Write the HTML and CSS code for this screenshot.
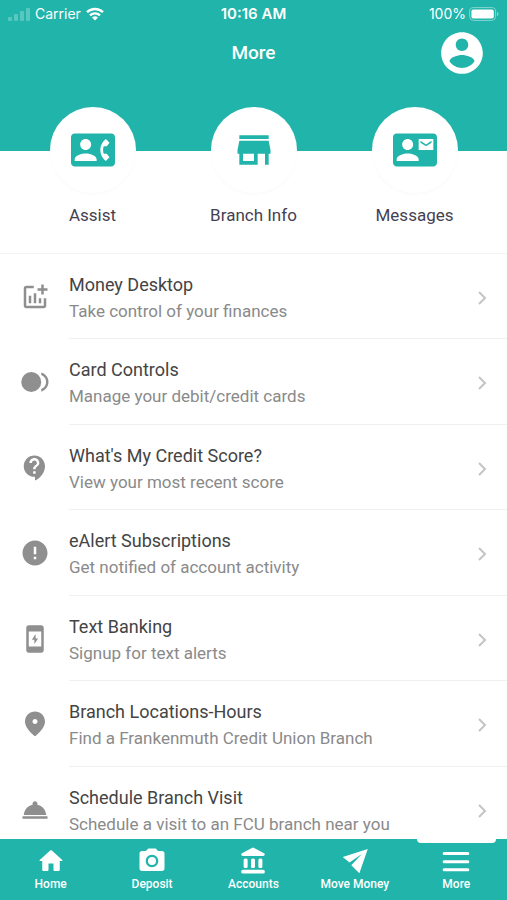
FILE: index.html
```html
<!DOCTYPE html>
<html lang="en">
<head>
<meta charset="utf-8">
<meta name="viewport" content="width=device-width, initial-scale=1">
<title>More</title>
<link rel="stylesheet" href="styles.css">
</head>
<body>
<header class="header">
  <div class="status">
    <div class="status-side">
      <svg class="signal" viewBox="0 0 22 13" aria-hidden="true"><rect x="0" y="9" width="4" height="4" rx="1"/><rect x="6" y="6" width="4" height="7" rx="1"/><rect x="12" y="3" width="4" height="10" rx="1"/><rect x="18" y="0" width="4" height="13" rx="1"/></svg>
      <span>Carrier</span>
      <svg class="wifi" viewBox="0 0 18 14" aria-hidden="true"><path d="M1 5.2a11.6 11.6 0 0 1 16 0M4 8.4a7.2 7.2 0 0 1 10 0" fill="none" stroke="#fff" stroke-width="2.4"/><path d="M9 13.6 6 10.6a4.3 4.3 0 0 1 6 0z" fill="#fff"/></svg>
    </div>
    <time class="clock">10:16 AM</time>
    <div class="status-side status-end">
      <span>100%</span>
      <svg class="battery" viewBox="0 0 30 14" aria-hidden="true"><rect x=".6" y=".6" width="26" height="12.8" rx="4" fill="none" stroke="#fff" stroke-opacity=".45"/><rect x="2.4" y="2.4" width="22.4" height="9.2" rx="2" fill="#fff"/><path d="M28 4.8c2 .8 2 3.6 0 4.4z" fill="#fff" fill-opacity=".45"/></svg>
    </div>
  </div>
  <div class="title-bar">
    <h1>More</h1>
    <button class="profile" type="button" aria-label="Profile">
      <svg viewBox="0 0 24 24"><path d="M12 2C6.48 2 2 6.48 2 12s4.48 10 10 10 10-4.48 10-10S17.52 2 12 2zm0 3c1.66 0 3 1.34 3 3s-1.34 3-3 3-3-1.34-3-3 1.34-3 3-3zm0 14.2c-2.5 0-4.71-1.28-6-3.22.03-1.99 4-3.08 6-3.08 1.99 0 5.97 1.09 6 3.08-1.29 1.94-3.5 3.22-6 3.22z"/></svg>
    </button>
  </div>
</header>
<section class="shortcuts">
  <a href="#assist"><span class="disc"><svg viewBox="0 0 24 24"><path d="M22 3H2C.9 3 0 3.9 0 5v14c0 1.1.9 2 2 2h20c1.1 0 1.99-.9 1.99-2L24 5c0-1.1-.9-2-2-2zM8 6c1.66 0 3 1.34 3 3s-1.34 3-3 3-3-1.34-3-3 1.34-3 3-3zm6 12H2v-1c0-2 4-3.1 6-3.1s6 1.1 6 3.1v1zm3.85-4h1.64L21 16l-1.99 1.99c-1.31-.98-2.28-2.38-2.73-3.99-.18-.64-.28-1.31-.28-2s.1-1.36.28-2c.45-1.62 1.42-3.01 2.73-3.99L21 8l-1.51 2h-1.64c-.22.63-.35 1.3-.35 2s.13 1.37.35 2z"/></svg></span>Assist</a>
  <a href="#branch"><span class="disc"><svg viewBox="0 0 24 24"><path d="M20 4H4v2h16V4zm1 10v-2l-1-5H4l-1 5v2h1v6h10v-6h4v6h2v-6h1zm-9 4H6v-4h6v4z"/></svg></span>Branch Info</a>
  <a href="#messages"><span class="disc"><svg viewBox="0 0 24 24"><path d="M22 3H2C.9 3 0 3.9 0 5v14c0 1.1.9 2 2 2h20c1.1 0 1.99-.9 1.99-2L24 5c0-1.1-.9-2-2-2zM8 6c1.66 0 3 1.34 3 3s-1.34 3-3 3-3-1.34-3-3 1.34-3 3-3zm6 12H2v-1c0-2 4-3.1 6-3.1s6 1.1 6 3.1v1zm8-6h-8V6h8v6zm-1-5l-3 2-3-2v1l3 2 3-2V7z"/></svg></span>Messages</a>
</section>
<main class="content">
  <ul class="list">
    <li><a href="#money-desktop"><svg class="icon" viewBox="0 0 24 24"><path d="M22 5v2h-3v3h-2V7h-3V5h3V2h2v3h3zm-3 14H5V5h6V3H5c-1.1 0-2 .9-2 2v14c0 1.1.9 2 2 2h14c1.1 0 2-.9 2-2v-6h-2v6zm-4-6v4h2v-4h-2zm-4 4h2V9h-2v8zm-2 0v-6H7v6h2z"/></svg><span class="text"><b>Money Desktop</b><small>Take control of your finances</small><svg class="chevron" viewBox="0 0 10 16"><path d="m2 2 6 6-6 6"/></svg></span></a></li>
    <li><a href="#card-controls"><svg class="icon" viewBox="0 0 24 24"><circle cx="9" cy="12" r="8"/><path d="M17 4.3v2.1a6 6 0 0 1 0 11.2v2.1a8 8 0 0 0 0-15.4z"/></svg><span class="text"><b>Card Controls</b><small>Manage your debit/credit cards</small><svg class="chevron" viewBox="0 0 10 16"><path d="m2 2 6 6-6 6"/></svg></span></a></li>
    <li><a href="#credit-score"><svg class="icon" viewBox="0 0 24 24"><path d="M11.500 2C6.810 2 3 5.810 3 10.500S6.810 19 11.500 19h.5v3c4.860-2.340 8-7 8-11.500C20 5.810 16.190 2 11.500 2zm1 14.500h-2v-2h2v2zm0-3.500h-2c0-3.250 3-3 3-5 0-1.100-.9-2-2-2s-2 .9-2 2h-2c0-2.210 1.790-4 4-4s4 1.790 4 4c0 2.500-3 2.750-3 5z"/></svg><span class="text"><b>What's My Credit Score?</b><small>View your most recent score</small><svg class="chevron" viewBox="0 0 10 16"><path d="m2 2 6 6-6 6"/></svg></span></a></li>
    <li><a href="#ealert"><svg class="icon" viewBox="0 0 24 24"><path d="M12 2C6.48 2 2 6.48 2 12s4.48 10 10 10 10-4.48 10-10S17.52 2 12 2zm1 15h-2v-2h2v2zm0-4h-2V7h2v6z"/></svg><span class="text"><b>eAlert Subscriptions</b><small>Get notified of account activity</small><svg class="chevron" viewBox="0 0 10 16"><path d="m2 2 6 6-6 6"/></svg></span></a></li>
    <li><a href="#text-banking"><svg class="icon" viewBox="0 0 24 24"><path d="M17 1H7c-1.100 0-2 .9-2 2v18c0 1.100.9 2 2 2h10c1.100 0 2-.9 2-2V3c0-1.100-.9-2-2-2zm0 17H7V6h10v12zm-4.500-6.500V8L9.500 12.500h2V16l3-4.500z"/></svg><span class="text"><b>Text Banking</b><small>Signup for text alerts</small><svg class="chevron" viewBox="0 0 10 16"><path d="m2 2 6 6-6 6"/></svg></span></a></li>
    <li><a href="#locations"><svg class="icon" viewBox="0 0 24 24"><path d="M12 2C7.8 2 4 5.220 4 10.200c0 3.180 2.450 6.920 7.340 11.230.38.33.95.33 1.330 0C17.550 17.120 20 13.380 20 10.200 20 5.220 16.200 2 12 2zm0 10c-1.100 0-2-.9-2-2s.9-2 2-2 2 .9 2 2-.9 2-2 2z"/></svg><span class="text"><b>Branch Locations-Hours</b><small>Find a Frankenmuth Credit Union Branch</small><svg class="chevron" viewBox="0 0 10 16"><path d="m2 2 6 6-6 6"/></svg></span></a></li>
    <li><a href="#schedule"><svg class="icon" viewBox="0 0 24 24"><path d="M2 17h20v2H2zm11.840-9.210c.1-.24.160-.51.160-.79 0-1.100-.9-2-2-2s-2 .9-2 2c0 .28.060.55.160.79C6.250 8.600 3.270 11.930 3 16h18c-.27-4.070-3.250-7.400-7.160-8.210z"/></svg><span class="text"><b>Schedule Branch Visit</b><small>Schedule a visit to an FCU branch near you</small><svg class="chevron" viewBox="0 0 10 16"><path d="m2 2 6 6-6 6"/></svg></span></a></li>
  </ul>
</main>
<nav class="tabs">
  <a href="#home"><svg viewBox="0 0 24 24"><path d="M10 19v-5h4v5c0 .55.45 1 1 1h3c.55 0 1-.45 1-1v-7h1.700c.46 0 .68-.57.33-.87L12.670 3.600c-.38-.34-.96-.34-1.340 0l-8.360 7.530c-.34.3-.13.87.33.87H5v7c0 .55.45 1 1 1h3c.55 0 1-.45 1-1z"/></svg>Home</a>
  <a href="#deposit"><svg viewBox="0 0 24 24"><path d="M9 2 7.170 4H4c-1.100 0-2 .9-2 2v12c0 1.100.9 2 2 2h16c1.100 0 2-.9 2-2V6c0-1.100-.9-2-2-2h-3.170L15 2H9zm3 15c-2.760 0-5-2.240-5-5s2.240-5 5-5 5 2.240 5 5-2.240 5-5 5z"/><circle cx="12" cy="12" r="3.200"/></svg>Deposit</a>
  <a href="#accounts"><svg viewBox="0 0 24 24"><rect x="4.500" y="10" width="3.200" height="7.500" rx="1.200"/><rect x="10.400" y="10" width="3.200" height="7.500" rx="1.200"/><rect x="16.300" y="10" width="3.200" height="7.500" rx="1.200"/><rect x="2.500" y="19" width="19" height="3" rx="1.500"/><path d="M11.100 1.500 3.200 5.700A1.250 1.250 0 0 0 3.800 8h16.400a1.240 1.240 0 0 0 .6-2.300l-7.900-4.200a2 2 0 0 0-1.800 0z"/></svg>Accounts</a>
  <a href="#move-money"><svg viewBox="0 0 24 24"><path d="M22.200 2.400 2.200 8.700 7.600 13.200 17.500 6.400 9 15.400l6.500 6.400z"/></svg>Move Money</a>
  <a href="#more" class="active" aria-current="page"><svg viewBox="0 0 24 24"><path d="M2.500 6h19M2.500 12.500h19M2.500 19h19" stroke="#fff" stroke-width="2.400" stroke-linecap="round"/></svg>More</a>
</nav>
</body>
</html>
```
FILE: styles.css
```css
* { box-sizing: border-box; }

body {
  margin: 0;
  height: 100vh;
  display: flex;
  flex-direction: column;
  background: #fff;
  color: #444;
  font-family: Roboto, "Liberation Sans", sans-serif;
}

a { color: inherit; text-decoration: none; }
svg { display: block; fill: currentColor; }

.header {
  flex: none;
  padding-bottom: 75px;
  background: #20b4aa;
  color: #fff;
}

.status {
  display: grid;
  grid-template-columns: 1fr auto 1fr;
  align-items: center;
  height: 28px;
  padding: 0 8px;
  font: 14px/28px Inter, sans-serif;
}

.status-side { display: flex; align-items: center; gap: 5px; }
.status-end { justify-content: flex-end; gap: 3px; }
.clock { font-size: 15px; font-weight: 600; }
.signal { width: 22px; height: 13px; opacity: .25; }
.wifi { width: 18px; height: 14px; }
.battery { width: 30px; height: 14px; }

.title-bar {
  display: grid;
  grid-template-columns: 1fr auto 1fr;
  align-items: center;
  height: 48px;
  padding: 0 20px;
}

.title-bar h1 {
  grid-column: 2;
  margin: 0;
  font-size: 19px;
  font-weight: 500;
  line-height: 24px;
}

.profile {
  justify-self: end;
  padding: 0;
  border: 0;
  background: none;
  color: #fff;
}

.profile svg { width: 50px; height: 50px; }

.shortcuts {
  flex: none;
  display: grid;
  grid-template-columns: repeat(3, 1fr);
  margin-top: -44px;
  padding: 0 12px 26px;
  border-bottom: 1px solid #f3f3f3;
}

.shortcuts a {
  display: flex;
  flex-direction: column;
  align-items: center;
  gap: 10px;
  color: #453f52;
  font-size: 17px;
  line-height: 24px;
}

.disc {
  display: grid;
  place-items: center;
  width: 86px;
  height: 86px;
  border-radius: 50%;
  background: #fff;
  color: #20b4aa;
  box-shadow: 0 2px 3px rgba(0, 0, 0, .02);
}

.disc svg { width: 44px; height: 44px; }

.content { flex: 1; min-height: 0; overflow: hidden; }
.list { margin: 0; padding: 0; list-style: none; }

.list a {
  display: flex;
  align-items: center;
  gap: 19px;
  height: 85px;
  padding-left: 20px;
}

.list li:nth-child(even) a { height: 86px; }
.icon { flex: none; width: 30px; height: 30px; color: #8f8f8f; }

.text {
  flex: 1;
  align-self: stretch;
  display: grid;
  grid-template-columns: 1fr auto;
  grid-template-rows: 26px 26px;
  align-items: center;
  padding: 18px 20px 0 0;
  border-bottom: 1px solid #f0f0f0;
}

.text b, .text small { grid-column: 1; font-weight: 400; line-height: 26px; white-space: nowrap; }
.text b { font-size: 18px; }
.text small { color: #8a8a8a; font-size: 17px; }

.chevron {
  grid-area: 1 / 2 / 3 / 3;
  width: 10px;
  height: 16px;
  fill: none;
  stroke: #c4c4c4;
  stroke-width: 2;
}

.tabs {
  flex: none;
  display: grid;
  grid-template-columns: repeat(5, 1fr);
  height: 61px;
  background: #20b4aa;
  color: #fff;
}

.tabs a {
  position: relative;
  display: flex;
  flex-direction: column;
  align-items: center;
  padding-top: 7px;
  font-size: 12px;
  font-weight: 500;
  line-height: 16px;
}

.tabs svg { width: 30px; height: 30px; }

.active::before {
  content: "";
  position: absolute;
  top: 0;
  left: 11px;
  right: 11px;
  height: 4px;
  border-radius: 0 0 4px 4px;
  background: #fff;
}
```
